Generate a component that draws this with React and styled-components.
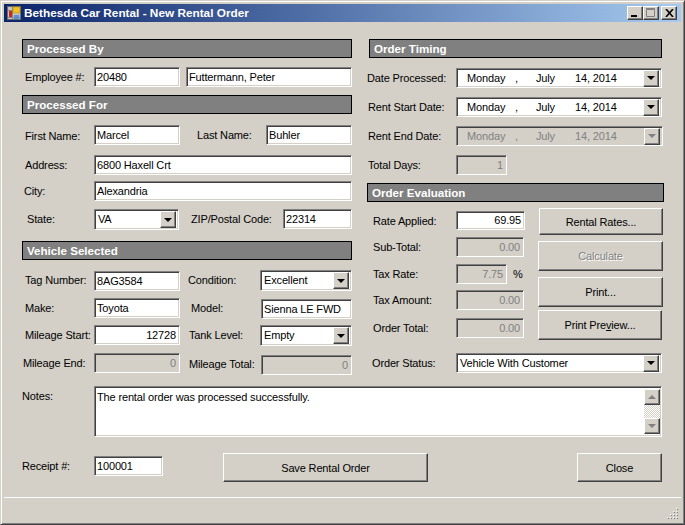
import React from "react";
import styled, { createGlobalStyle, css } from "styled-components";

const GlobalStyle = createGlobalStyle`
  html, body {
    margin: 0;
    padding: 0;
    background: #d4d0c8;
  }
  body {
    font-family: "Liberation Sans", Arial, sans-serif;
    font-size: 11px;
    letter-spacing: -0.15px;
    color: #000;
  }
`;

const sunken = css`
  border: 1px solid;
  border-color: #808080 #fff #fff #808080;
  box-shadow: inset 1px 1px 0 #404040, inset -1px -1px 0 #d4d0c8;
`;

const raised = css`
  border: 1px solid;
  border-color: #fff #404040 #404040 #fff;
  box-shadow: inset -1px -1px 0 #808080;
  background: #d4d0c8;
`;

const Window = styled.div`
  box-sizing: border-box;
  width: 685px;
  height: 525px;
  display: flex;
  flex-direction: column;
  padding: 3px;
  background: #d4d0c8;
  border: 1px solid;
  border-color: #d4d0c8 #404040 #404040 #d4d0c8;
  box-shadow: inset 1px 1px 0 #fff, inset -1px -1px 0 #808080;
`;

const TitleBar = styled.div`
  height: 18px;
  flex: none;
  display: flex;
  align-items: center;
  padding: 0 3px;
  background: linear-gradient(90deg, #0a246a, #a6caf0);
`;

const TitleText = styled.span`
  flex: 1;
  margin-left: 3px;
  color: #fff;
  font-weight: bold;
  font-size: 11.8px;
  letter-spacing: 0;
`;

const CaptionButtons = styled.div`
  display: flex;
  margin-right: 1px;
`;

const CaptionButton = styled.div`
  box-sizing: border-box;
  ${raised}
  width: 16px;
  height: 14px;
  margin-left: ${(p) => p.$ml || 0}px;
  display: flex;
  align-items: center;
  justify-content: center;
`;

const Content = styled.div`
  flex: 1;
  display: flex;
  flex-direction: column;
  padding: 17px 18px 0;
`;

const Columns = styled.div`
  display: flex;
  align-items: flex-start;
`;

const LeftColumn = styled.div`
  width: 330px;
  flex: none;
`;

const RightColumn = styled.div`
  width: 297px;
  margin-left: 15px;
  flex: none;
`;

const SectionHeader = styled.div`
  box-sizing: border-box;
  height: 19px;
  line-height: 17px;
  margin-top: ${(p) => p.$mt || 0}px;
  margin-left: ${(p) => p.$ml || 0}px;
  margin-right: ${(p) => p.$mr || 0}px;
  padding-left: 4px;
  background: #808080;
  border: 1px solid #000;
  color: #fff;
  font-weight: bold;
  font-size: 11.6px;
  letter-spacing: 0;
`;

const Row = styled.div`
  display: flex;
  align-items: flex-start;
  margin-top: ${(p) => p.$mt || 0}px;
`;

const Label = styled.div`
  box-sizing: border-box;
  flex: none;
  width: ${(p) => p.$w}px;
  height: 20px;
  line-height: 20px;
  padding-left: ${(p) => p.$pl || 0}px;
  margin-top: ${(p) => p.$dy || 0}px;
  white-space: nowrap;
`;

const Field = styled.div`
  box-sizing: border-box;
  ${sunken}
  flex: none;
  width: ${(p) => p.$w}px;
  height: ${(p) => p.$h || 20}px;
  line-height: ${(p) => (p.$h || 20) - 2}px;
  margin-left: ${(p) => p.$ml || 0}px;
  margin-top: ${(p) => p.$dy || 0}px;
  padding: 0 3px 0 2px;
  white-space: nowrap;
  overflow: hidden;
  background: ${(p) => (p.$off ? "#d4d0c8" : "#fff")};
  color: ${(p) => (p.$off ? "#808080" : "#000")};
  text-align: ${(p) => (p.$right ? "right" : "left")};
`;

const Combo = styled(Field)`
  display: flex;
  align-items: center;
  justify-content: space-between;
  padding: 0 2px 0 3px;
`;

const ComboArrow = styled.div`
  box-sizing: border-box;
  ${raised}
  width: 16px;
  height: 17px;
  flex: none;
  display: flex;
  align-items: center;
  justify-content: center;
`;

const Caret = styled.div`
  width: 0;
  height: 0;
  border-left: 4px solid transparent;
  border-right: 4px solid transparent;
  border-top: 4px solid ${(p) => (p.$off ? "#808080" : "#000")};
  ${(p) => p.$up && css`
    border-top: 0;
    border-bottom: 4px solid #808080;
  `}
`;

const DateText = styled.div`
  display: flex;
  padding-left: 7px;
`;

const DatePart = styled.span`
  width: ${(p) => p.$w}px;
`;

const PercentSign = styled.span`
  margin-left: 6px;
  line-height: 20px;
`;

const Evaluation = styled.div`
  display: flex;
  align-items: flex-start;
`;

const EvaluationFields = styled.div`
  width: 171px;
  flex: none;
  padding-top: 9px;
`;

const ButtonStack = styled.div`
  display: flex;
  flex-direction: column;
  padding-top: 6px;
`;

const PushButton = styled.button`
  box-sizing: border-box;
  ${raised}
  display: block;
  width: ${(p) => p.$w}px;
  height: ${(p) => p.$h}px;
  margin-top: ${(p) => p.$mt || 0}px;
  margin-left: ${(p) => p.$ml || 0}px;
  padding: 0;
  font: inherit;
  letter-spacing: inherit;
  color: ${(p) => (p.disabled ? "#808080" : "#000")};
  text-shadow: ${(p) => (p.disabled ? "1px 1px 0 #fff" : "none")};
`;

const NotesBox = styled(Field)`
  display: flex;
  justify-content: space-between;
  padding: 2px 1px 2px 2px;
  line-height: 15px;
`;

const NotesText = styled.span`
  margin-top: 1px;
`;

const ScrollBar = styled.div`
  width: 16px;
  flex: none;
  display: flex;
  flex-direction: column;
  justify-content: space-between;
  background: repeating-conic-gradient(#fff 0 25%, #d4d0c8 0 50%) 0 0 / 2px 2px;
`;

const ScrollButton = styled(ComboArrow)`
  height: 16px;
`;

const StatusBar = styled.div`
  margin-top: auto;
  height: 21px;
  flex: none;
  display: flex;
  justify-content: flex-end;
  align-items: flex-end;
  padding: 0 2px 2px 0;
  box-sizing: content-box;
  border-top: 1px solid #fff;
`;

const AppIcon = () => (
  <svg width="14" height="14" viewBox="0 0 14 14">
    <rect x="0.5" y="0.5" width="13" height="13" fill="#c8c4bc" stroke="#6a6a6a" />
    <path d="M1 4.5H6M1 11.5H13M5.5 1V13" stroke="#8a8a8a" />
    <rect x="6" y="1" width="7" height="6" fill="#f0c020" stroke="#b88810" strokeWidth="0.5" />
    <rect x="2" y="5" width="3" height="6" fill="#c8281c" />
    <rect x="7" y="9" width="5" height="4" fill="#5c8ed8" />
  </svg>
);

const Grip = () => (
  <svg width="12" height="12" viewBox="0 0 12 12">
    {[[9, 1], [6, 4], [9, 4], [3, 7], [6, 7], [9, 7], [0, 10], [3, 10], [6, 10], [9, 10]].map(([x, y]) => (
      <g key={`${x}-${y}`}>
        <rect x={x} y={y} width="1" height="1" fill="#fff" />
        <rect x={x + 1} y={y + 1} width="1" height="1" fill="#808080" />
      </g>
    ))}
  </svg>
);

const DropDown = ({ off, children, ...rest }) => (
  <Combo $off={off} {...rest}>
    {children}
    <ComboArrow>
      <Caret $off={off} />
    </ComboArrow>
  </Combo>
);

const DateValue = () => (
  <DateText>
    <DatePart $w={48}>Monday</DatePart>
    <DatePart $w={21}>,</DatePart>
    <DatePart $w={39}>July</DatePart>
    <span>14, 2014</span>
  </DateText>
);

const App = () => (
  <Window>
    <GlobalStyle />
    <TitleBar>
      <AppIcon />
      <TitleText>Bethesda Car Rental - New Rental Order</TitleText>
      <CaptionButtons>
        <CaptionButton>
          <svg width="8" height="8" viewBox="0 0 8 8">
            <rect x="0" y="6" width="6" height="2" fill="#000" />
          </svg>
        </CaptionButton>
        <CaptionButton>
          <svg width="10" height="10" viewBox="0 0 10 10">
            <path d="M0.5 1.5H8.5V8.5H0.5Z M0 0.5H9" fill="none" stroke="#808080" />
          </svg>
        </CaptionButton>
        <CaptionButton $ml={2}>
          <svg width="9" height="8" viewBox="0 0 9 8">
            <path d="M1 0L8 8M8 0L1 8" stroke="#000" strokeWidth="1.6" />
          </svg>
        </CaptionButton>
      </CaptionButtons>
    </TitleBar>

    <Content>
      <Columns>
        <LeftColumn>
          <SectionHeader>Processed By</SectionHeader>
          <Row $mt={9}>
            <Label $w={72} $pl={3}>Employee #:</Label>
            <Field $w={86}>20480</Field>
            <Field $w={166} $ml={6}>Futtermann, Peter</Field>
          </Row>
          <SectionHeader $mt={8}>Processed For</SectionHeader>
          <Row $mt={11}>
            <Label $w={72} $pl={3} $dy={1}>First Name:</Label>
            <Field $w={86}>Marcel</Field>
            <Label $w={86} $pl={17}>Last Name:</Label>
            <Field $w={86}>Buhler</Field>
          </Row>
          <Row $mt={9}>
            <Label $w={72} $pl={3}>Address:</Label>
            <Field $w={258}>6800 Haxell Crt</Field>
          </Row>
          <Row $mt={6}>
            <Label $w={72} $pl={2}>City:</Label>
            <Field $w={258}>Alexandria</Field>
          </Row>
          <Row $mt={8}>
            <Label $w={72} $pl={5}>State:</Label>
            <DropDown $w={85} $h={21}>VA</DropDown>
            <Label $w={104} $pl={12}>ZIP/Postal Code:</Label>
            <Field $w={69}>22314</Field>
          </Row>
          <SectionHeader $mt={11}>Vehicle Selected</SectionHeader>
          <Row $mt={10}>
            <Label $w={72} $pl={3}>Tag Number:</Label>
            <Field $w={86} $dy={1}>8AG3584</Field>
            <Label $w={80} $pl={8}>Condition:</Label>
            <DropDown $w={92} $h={21}>Excellent</DropDown>
          </Row>
          <Row $mt={7}>
            <Label $w={72} $pl={3}>Make:</Label>
            <Field $w={86}>Toyota</Field>
            <Label $w={81} $pl={11}>Model:</Label>
            <Field $w={91} $dy={1}>Sienna LE FWD</Field>
          </Row>
          <Row $mt={6}>
            <Label $w={72} $pl={3}>Mileage Start:</Label>
            <Field $w={86} $right>12728</Field>
            <Label $w={80} $pl={9}>Tank Level:</Label>
            <DropDown $w={92} $h={21}>Empty</DropDown>
          </Row>
          <Row $mt={7}>
            <Label $w={72} $pl={1}>Mileage End:</Label>
            <Field $w={86} $off $right>0</Field>
            <Label $w={81} $pl={9} $dy={1}>Mileage Total:</Label>
            <Field $w={91} $off $right $dy={2}>0</Field>
          </Row>
        </LeftColumn>

        <RightColumn>
          <SectionHeader $ml={2} $mr={2}>Order Timing</SectionHeader>
          <Row $mt={10}>
            <Label $w={89}>Date Processed:</Label>
            <DropDown $w={206}><DateValue /></DropDown>
          </Row>
          <Row $mt={9}>
            <Label $w={89} $pl={1}>Rent Start Date:</Label>
            <DropDown $w={206}><DateValue /></DropDown>
          </Row>
          <Row $mt={9}>
            <Label $w={89} $pl={1}>Rent End Date:</Label>
            <DropDown $w={207} off><DateValue /></DropDown>
          </Row>
          <Row $mt={9}>
            <Label $w={89} $pl={1}>Total Days:</Label>
            <Field $w={51} $off $right>1</Field>
          </Row>
          <SectionHeader $mt={8}>Order Evaluation</SectionHeader>
          <Evaluation>
            <EvaluationFields>
              <Row>
                <Label $w={89} $pl={6}>Rate Applied:</Label>
                <Field $w={69} $h={19} $right>69.95</Field>
              </Row>
              <Row $mt={6}>
                <Label $w={89} $pl={6}>Sub-Total:</Label>
                <Field $w={68} $off $right>0.00</Field>
              </Row>
              <Row $mt={7}>
                <Label $w={89} $pl={6}>Tax Rate:</Label>
                <Field $w={51} $off $right>7.75</Field>
                <PercentSign>%</PercentSign>
              </Row>
              <Row $mt={6}>
                <Label $w={89} $pl={6}>Tax Amount:</Label>
                <Field $w={68} $off $right>0.00</Field>
              </Row>
              <Row $mt={8}>
                <Label $w={89} $pl={6}>Order Total:</Label>
                <Field $w={68} $off $right>0.00</Field>
              </Row>
            </EvaluationFields>
            <ButtonStack>
              <PushButton $w={124} $h={27} $ml={1}>Rental Rates...</PushButton>
              <PushButton $w={125} $h={30} $mt={6} disabled>Calculate</PushButton>
              <PushButton $w={125} $h={30} $mt={6}>Print...</PushButton>
              <PushButton $w={124} $h={30} $mt={3}>Print Pre<u>v</u>iew...</PushButton>
            </ButtonStack>
          </Evaluation>
          <Row $mt={13}>
            <Label $w={89} $pl={5}>Order Status:</Label>
            <DropDown $w={206}>Vehicle With Customer</DropDown>
          </Row>
        </RightColumn>
      </Columns>

      <Row $mt={11}>
        <Label $w={72}>Notes:</Label>
        <NotesBox $w={568} $h={51}>
          <NotesText>The rental order was processed successfully.</NotesText>
          <ScrollBar>
            <ScrollButton><Caret $up /></ScrollButton>
            <ScrollButton><Caret $off /></ScrollButton>
          </ScrollBar>
        </NotesBox>
      </Row>

      <Row $mt={16}>
        <Label $w={72} $dy={3}>Receipt #:</Label>
        <Field $w={69} $dy={3}>100001</Field>
        <PushButton $w={205} $h={29} $ml={60}>Save Rental Order</PushButton>
        <PushButton $w={85} $h={29} $ml={149}>Close</PushButton>
      </Row>
    </Content>

    <StatusBar>
      <Grip />
    </StatusBar>
  </Window>
);

export default App;
